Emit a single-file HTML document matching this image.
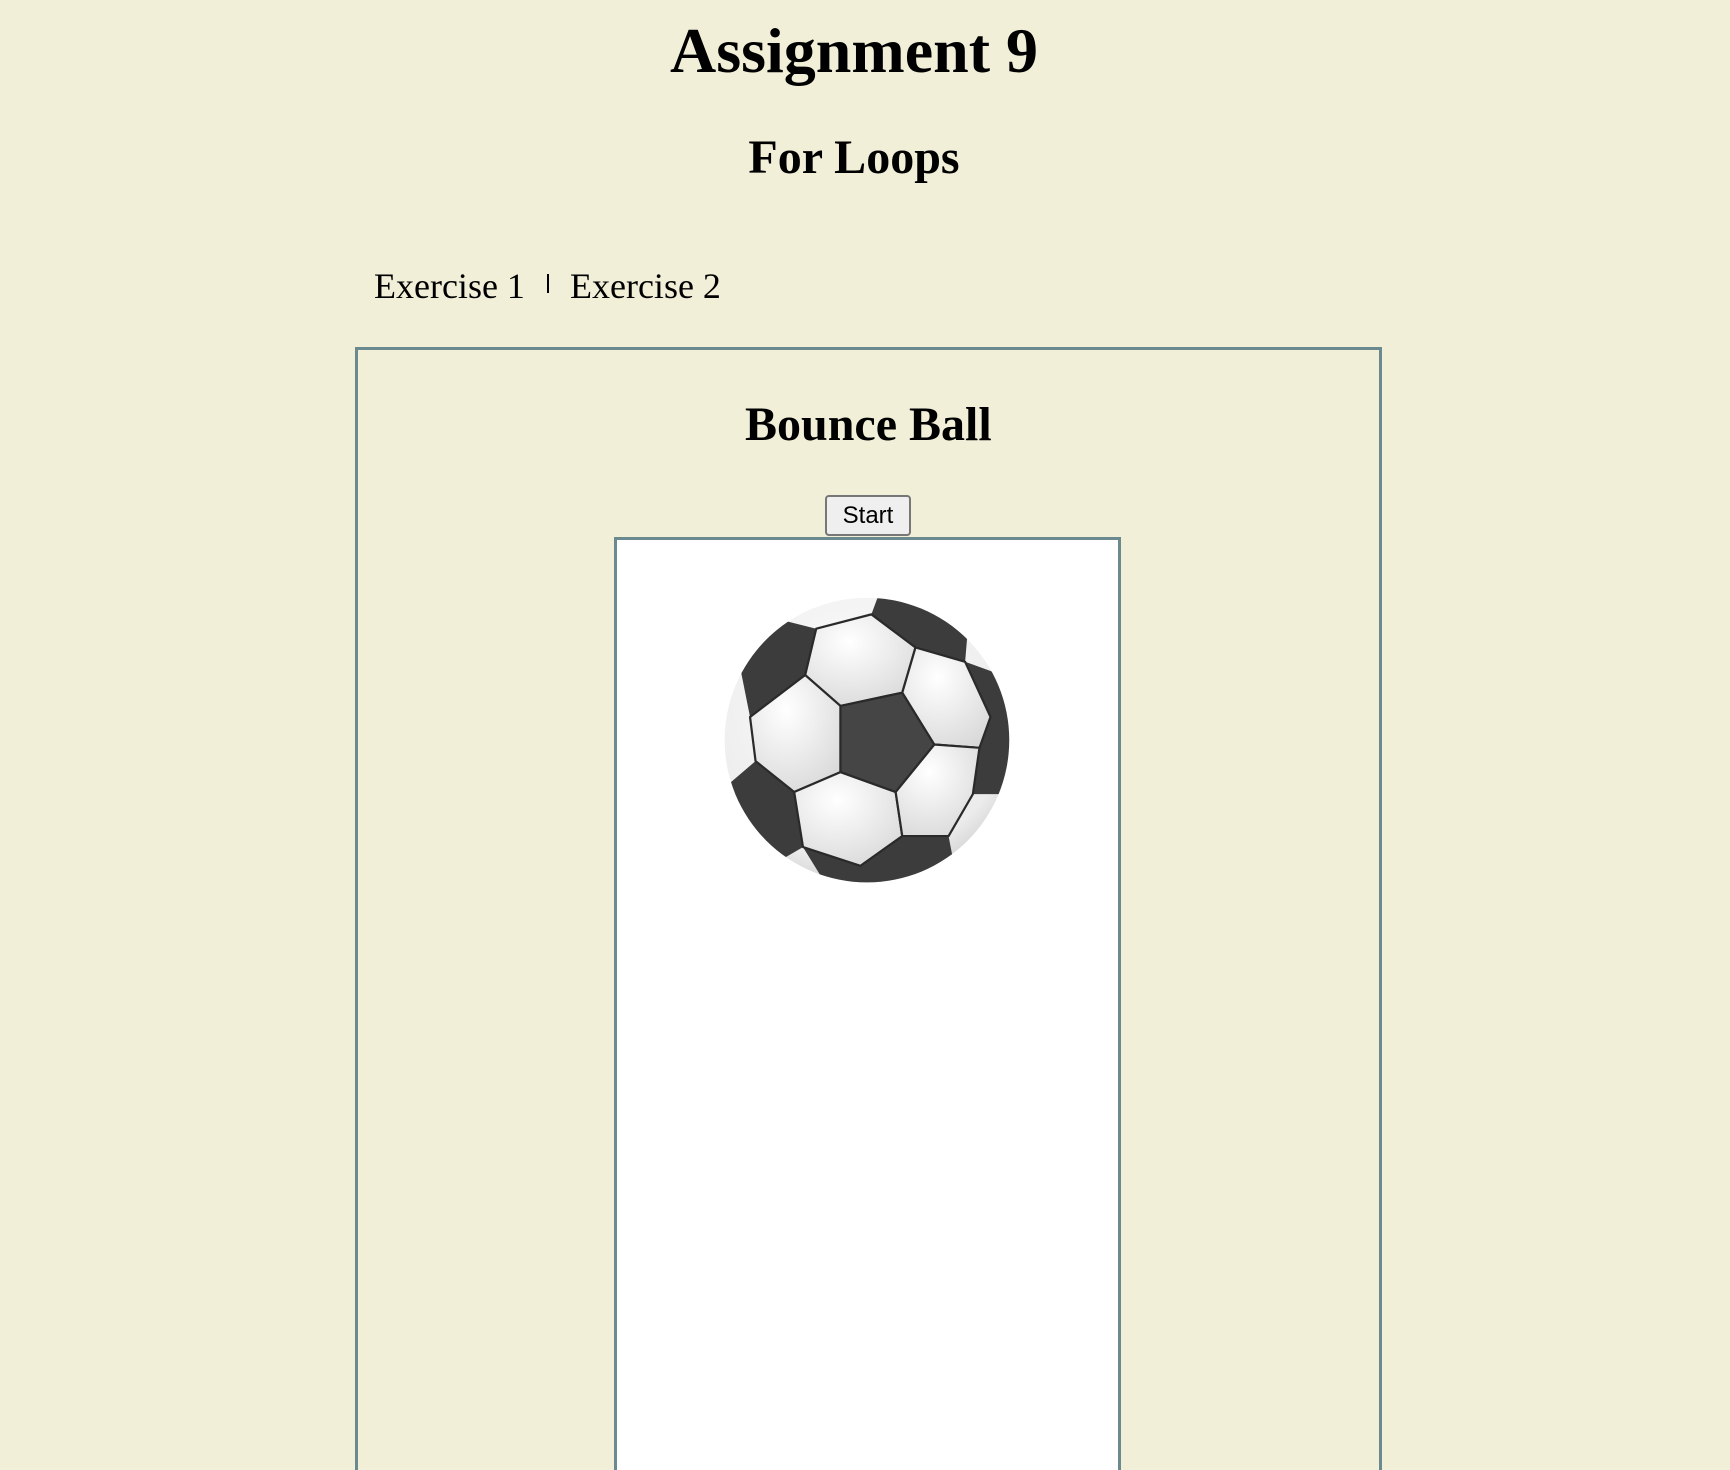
<!DOCTYPE html>
<html><head><meta charset="utf-8"><style>
html,body{margin:0;padding:0;height:1470px;overflow:hidden;}
body{width:1730px;background:#f1efd8;position:relative;font-family:"Liberation Serif",serif;color:#000;}
.t{position:absolute;line-height:1;white-space:nowrap;}
.c{left:0;width:100%;text-align:center;}
.box{position:absolute;left:355px;top:347px;width:1027px;height:1128px;border:3px solid #6a8a90;box-sizing:border-box;}
.cv{position:absolute;left:614px;top:537px;width:507px;height:938px;border:3px solid #6a8a90;background:#fff;box-sizing:border-box;}
.btn{position:absolute;left:825px;top:495px;width:86px;height:41px;box-sizing:border-box;border:2px solid #777;border-radius:4px;background:#efefef;font-family:"Liberation Sans",sans-serif;font-size:24px;line-height:37px;text-align:center;}
</style></head><body>
<div class="t c" style="top:19px;font-size:64px;font-weight:bold;left:-11px;">Assignment 9</div>
<div class="t c" style="top:134px;font-size:48px;font-weight:bold;left:-11px;">For Loops</div>
<div class="t" style="top:268px;left:374px;font-size:36px;">Exercise 1</div>
<div style="position:absolute;left:547px;top:274px;width:2px;height:19px;background:#000;"></div>
<div class="t" style="top:268px;left:570px;font-size:36px;">Exercise 2</div>
<div class="box"></div>
<div class="t" style="top:401px;left:745px;font-size:48px;font-weight:bold;">Bounce Ball</div>
<div class="cv"></div>
<div class="btn">Start</div>
<svg style="position:absolute;left:0;top:0" width="1730" height="1470">
<defs>
<clipPath id="cp"><circle cx="786" cy="671" r="129"/></clipPath>
<radialGradient id="bg" cx="0.45" cy="0.35" r="0.7"><stop offset="0" stop-color="#ffffff"/><stop offset="0.75" stop-color="#ececec"/><stop offset="1" stop-color="#bdbdbd"/></radialGradient>
<radialGradient id="wg" cx="0.4" cy="0.3" r="0.8"><stop offset="0" stop-color="#ffffff"/><stop offset="1" stop-color="#d8d8d8"/></radialGradient>
</defs>
<g transform="scale(1.103)">
<g clip-path="url(#cp)">
<rect x="650" y="535" width="280" height="280" fill="url(#bg)"/>
<g fill="#3c3c3c">
<polygon points="730,612 740,570 700,560 670,600 680,650"/>
<polygon points="790,557 830,587 875,600 880,540 800,530"/>
<polygon points="875,600 898,650 888,678 882,720 930,720 930,620"/>
<polygon points="685,690 720,718 728,768 690,790 650,720"/>
<polygon points="728,768 780,785 818,758 860,758 870,810 760,820"/>
</g>
<g fill="url(#wg)" stroke="#2a2a2a" stroke-width="2" stroke-linejoin="round">
<polygon points="740,570 790,557 830,587 818,628 762,640 730,612"/>
<polygon points="830,587 875,600 898,650 888,678 847,675 818,628"/>
<polygon points="680,650 730,612 762,640 762,700 720,718 685,690"/>
<polygon points="720,718 762,700 812,718 818,758 780,785 728,768"/>
<polygon points="812,718 847,675 888,678 882,720 860,758 818,758"/>
</g>
<polygon points="762,640 818,628 847,675 812,718 762,700" fill="#454545" stroke="#2a2a2a" stroke-width="2"/>
</g>
</g>
</svg>
</body></html>
